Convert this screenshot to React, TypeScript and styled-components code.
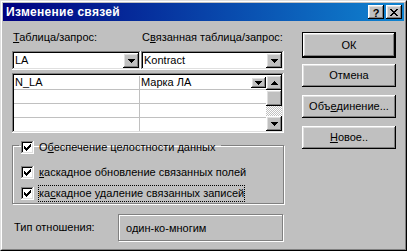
import React from "react";
import styled, { createGlobalStyle, css } from "styled-components";

const Global = createGlobalStyle`
  html, body { margin: 0; padding: 0; background: #c0c0c0; }
  body {
    font-family: "Liberation Sans", Arial, sans-serif;
    font-size: 11px;
    color: #000;
  }
  * { box-sizing: border-box; }
`;

const raised = css`
  background: #c0c0c0;
  box-shadow: inset -1px -1px #000, inset 1px 1px #fff, inset -2px -2px #808080,
    inset 2px 2px #dfdfdf;
`;

const sunken = css`
  box-shadow: inset -1px -1px #fff, inset 1px 1px #808080, inset -2px -2px #dfdfdf,
    inset 2px 2px #000;
`;

const etched = css`
  border: 1px solid #808080;
  box-shadow: inset 1px 1px #fff, 1px 1px #fff;
`;

const Window = styled.div`
  width: 407px;
  height: 251px;
  border: 1px solid;
  border-color: #dfdfdf #000 #000 #dfdfdf;
  display: flex;
  background: #c0c0c0;
`;

const Frame = styled.div`
  flex: 1;
  border: 1px solid;
  border-color: #fff #808080 #808080 #fff;
  padding: 1px;
  display: flex;
  flex-direction: column;
`;

const TitleBar = styled.div`
  height: 18px;
  flex: none;
  background: linear-gradient(to right, #000080, #1084d0);
  display: flex;
  align-items: center;
  padding: 0 2px 0 3px;
`;

const Title = styled.span`
  flex: 1;
  color: #fff;
  font-weight: bold;
  font-size: 12px;
  letter-spacing: 0.3px;
`;

const TitleButton = styled.div<{ $gap: number }>`
  ${raised};
  width: 16px;
  height: 14px;
  margin-left: ${(p) => p.$gap}px;
  display: flex;
  align-items: center;
  justify-content: center;
  font-weight: bold;
  font-size: 11px;
  line-height: 14px;
  padding-top: 1px;
`;

const Body = styled.div`
  flex: 1;
  display: flex;
  gap: 18px;
  padding: 10px 0 0 9px;
`;

const LeftCol = styled.div`
  width: 272px;
  display: flex;
  flex-direction: column;
`;

const RightCol = styled.div`
  width: 94px;
  display: flex;
  flex-direction: column;
  gap: 8px;
  padding-top: 1px;
`;

const Pair = styled.div<{ $height: number; $top: number }>`
  display: grid;
  grid-template-columns: 129px 1fr;
  height: ${(p) => p.$height}px;
  margin-top: ${(p) => p.$top}px;
`;

const FieldLabel = styled.div`
  line-height: 13px;
  padding-left: 1px;
  white-space: nowrap;
`;

const Combo = styled.div`
  ${sunken};
  background: #fff;
  display: flex;
  align-items: stretch;
  padding: 2px;
`;

const ComboText = styled.div`
  flex: 1;
  padding-left: 1px;
  line-height: 15px;
`;

const DropButton = styled.div<{ $w: number; $h?: number }>`
  ${raised};
  width: ${(p) => p.$w}px;
  ${(p) => (p.$h ? `height: ${p.$h}px;` : "")}
  flex: none;
  display: flex;
  align-items: center;
  justify-content: center;
`;

const Grid = styled.div`
  ${sunken};
  background: #fff;
  margin-top: 3px;
  height: 60px;
  padding: 2px;
  display: flex;
`;

const GridRows = styled.div`
  flex: 1;
  padding-top: 1px;
  overflow: hidden;
  display: flex;
  flex-direction: column;
`;

const GridRow = styled.div`
  display: grid;
  grid-template-columns: 126px 1fr;
  height: 14px;
  flex: none;
  border-bottom: 1px solid #c0c0c0;
`;

const Cell = styled.div<{ $first?: boolean }>`
  line-height: 13px;
  padding-left: 1px;
  display: flex;
  align-items: center;
  justify-content: space-between;
  ${(p) => (p.$first ? "border-right: 1px solid #c0c0c0;" : "")}
`;

const ScrollBar = styled.div`
  width: 16px;
  display: flex;
  flex-direction: column;
`;

const ScrollBtn = styled.div<{ $h: number }>`
  ${raised};
  height: ${(p) => p.$h}px;
  flex: none;
  display: flex;
  align-items: center;
  justify-content: center;
`;

const Track = styled.div`
  flex: 1;
  background-color: #fff;
  background-image: repeating-conic-gradient(#c0c0c0 0 25%, #fff 0 50%);
  background-size: 2px 2px;
`;

const Group = styled.fieldset`
  ${etched};
  margin: 8px 0 0 0;
  padding: 0 0 1px 6px;
  min-width: 0;
`;

const Caption = styled.legend`
  height: 9px;
  padding: 4px 5px 0 2px;
  display: flex;
  align-items: center;
  overflow: visible;
`;

const Rows = styled.div`
  margin-top: 14px;
  padding-left: 2px;
  display: flex;
  flex-direction: column;
  gap: 4px;
`;

const CheckRow = styled.div`
  height: 17px;
  display: flex;
  align-items: center;
`;

const Box = styled.div`
  ${sunken};
  width: 13px;
  height: 13px;
  flex: none;
  background: #fff;
  padding: 3px;
  margin-right: 4px;
  display: flex;
`;

const CheckLabel = styled.span<{ $focus?: boolean }>`
  line-height: 13px;
  white-space: nowrap;
  border: 1px ${(p) => (p.$focus ? "dotted #000" : "solid transparent")};
  padding: ${(p) => (p.$focus ? "1px 0" : "0")};
`;

const TypeRow = styled.div`
  margin-top: 10px;
  height: 27px;
  display: flex;
  align-items: center;
`;

const TypeLabel = styled.div`
  width: 106px;
  padding-left: 2px;
  line-height: 13px;
`;

const TypeBox = styled.div`
  ${etched};
  width: 165px;
  height: 27px;
  display: flex;
  align-items: center;
  padding-left: 7px;
`;

const Button = styled.div<{ $default?: boolean }>`
  ${raised};
  height: ${(p) => (p.$default ? 26 : 23)}px;
  ${(p) => (p.$default ? "border: 1px solid #000; margin-bottom: -2px;" : "")}
  display: flex;
  align-items: center;
  justify-content: center;
  line-height: 13px;
  white-space: nowrap;
`;

const ArrowDown = () => (
  <svg width="7" height="4" viewBox="0 0 7 4" shapeRendering="crispEdges">
    <path d="M0 0h7v1H0zM1 1h5v1H1zM2 2h3v1H2zM3 3h1v1H3z" fill="#000" />
  </svg>
);

const ArrowUp = () => (
  <svg width="7" height="4" viewBox="0 0 7 4" shapeRendering="crispEdges">
    <path d="M3 0h1v1H3zM2 1h3v1H2zM1 2h5v1H1zM0 3h7v1H0z" fill="#000" />
  </svg>
);

const CloseGlyph = () => (
  <svg width="8" height="7" viewBox="0 0 8 7" shapeRendering="crispEdges">
    <path
      d="M0 0h2v1H0zM6 0h2v1H6zM1 1h2v1H1zM5 1h2v1H5zM2 2h4v1H2zM3 3h2v1H3zM2 4h4v1H2zM1 5h2v1H1zM5 5h2v1H5zM0 6h2v1H0zM6 6h2v1H6z"
      fill="#000"
    />
  </svg>
);

const Check = () => (
  <svg width="7" height="7" viewBox="0 0 7 7" shapeRendering="crispEdges">
    <path
      d="M0 2h1v3H0zM1 3h1v3H1zM2 4h1v3H2zM3 3h1v3H3zM4 2h1v3H4zM5 1h1v3H5zM6 0h1v3H6z"
      fill="#000"
    />
  </svg>
);

const CheckBox = () => (
  <Box>
    <Check />
  </Box>
);

export default function App() {
  return (
    <>
      <Global />
      <Window>
        <Frame>
          <TitleBar>
            <Title>Изменение связей</Title>
            <TitleButton $gap={0}>?</TitleButton>
            <TitleButton $gap={2}>
              <CloseGlyph />
            </TitleButton>
          </TitleBar>
          <Body>
            <LeftCol>
              <Pair $height={13} $top={0}>
                <FieldLabel>
                  <u>Т</u>аблица/запрос:
                </FieldLabel>
                <FieldLabel>
                  С<u>в</u>язанная таблица/запрос:
                </FieldLabel>
              </Pair>
              <Pair $height={19} $top={7}>
                <Combo>
                  <ComboText>LA</ComboText>
                  <DropButton $w={16}>
                    <ArrowDown />
                  </DropButton>
                </Combo>
                <Combo>
                  <ComboText>Kontract</ComboText>
                  <DropButton $w={16}>
                    <ArrowDown />
                  </DropButton>
                </Combo>
              </Pair>
              <Grid>
                <GridRows>
                  <GridRow>
                    <Cell $first>N_LA</Cell>
                    <Cell>
                      Марка ЛА
                      <DropButton $w={15} $h={11}>
                        <ArrowDown />
                      </DropButton>
                    </Cell>
                  </GridRow>
                  <GridRow>
                    <Cell $first />
                    <Cell />
                  </GridRow>
                  <GridRow>
                    <Cell $first />
                    <Cell />
                  </GridRow>
                  <GridRow>
                    <Cell $first />
                    <Cell />
                  </GridRow>
                </GridRows>
                <ScrollBar>
                  <ScrollBtn $h={15}>
                    <ArrowUp />
                  </ScrollBtn>
                  <ScrollBtn $h={16} />
                  <Track />
                  <ScrollBtn $h={15}>
                    <ArrowDown />
                  </ScrollBtn>
                </ScrollBar>
              </Grid>
              <Group>
                <Caption>
                  <CheckBox />
                  <CheckLabel>
                    О<u>б</u>еспечение целостности данных
                  </CheckLabel>
                </Caption>
                <Rows>
                  <CheckRow>
                    <CheckBox />
                    <CheckLabel>
                      <u>к</u>аскадное обновление связанных полей
                    </CheckLabel>
                  </CheckRow>
                  <CheckRow>
                    <CheckBox />
                    <CheckLabel $focus>
                      ка<u>с</u>кадное удаление связанных записей
                    </CheckLabel>
                  </CheckRow>
                </Rows>
              </Group>
              <TypeRow>
                <TypeLabel>Тип отношения:</TypeLabel>
                <TypeBox>один-ко-многим</TypeBox>
              </TypeRow>
            </LeftCol>
            <RightCol>
              <Button $default>ОК</Button>
              <Button>Отмена</Button>
              <Button>
                Объ<u>е</u>динение...
              </Button>
              <Button>
                <u>Н</u>овое..
              </Button>
            </RightCol>
          </Body>
        </Frame>
      </Window>
    </>
  );
}
